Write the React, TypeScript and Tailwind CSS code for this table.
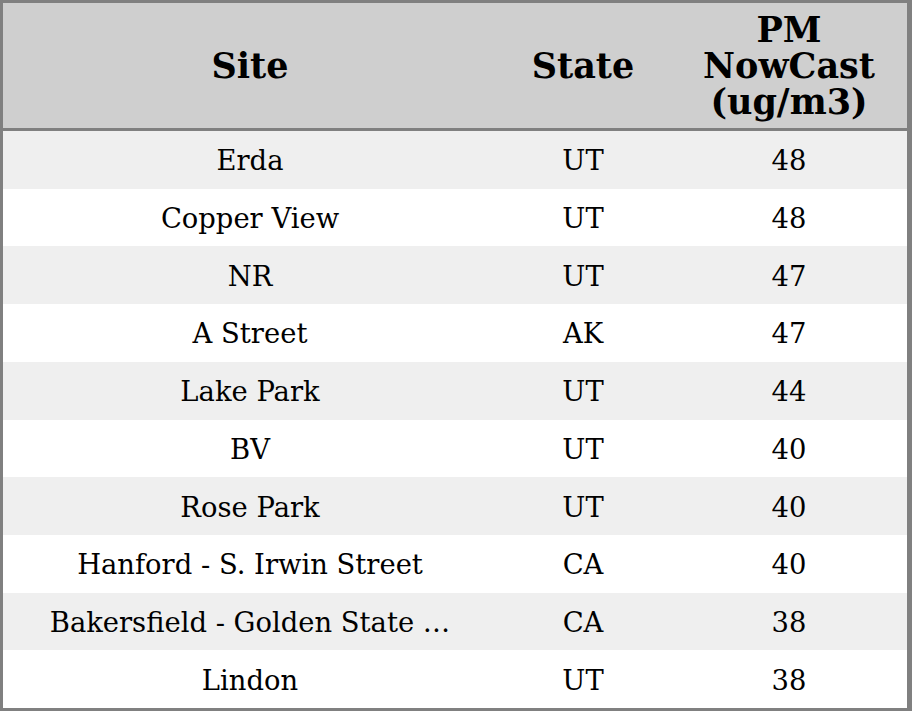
import React from "react";

const rows: [string, string, string][] = [
  ["Erda", "UT", "48"],
  ["Copper View", "UT", "48"],
  ["NR", "UT", "47"],
  ["A Street", "AK", "47"],
  ["Lake Park", "UT", "44"],
  ["BV", "UT", "40"],
  ["Rose Park", "UT", "40"],
  ["Hanford - S. Irwin Street", "CA", "40"],
  ["Bakersfield - Golden State …", "CA", "38"],
  ["Lindon", "UT", "38"],
];

export default function App() {
  return (
    <div
      className="w-[912px] h-[711px] bg-white text-black border-t-[3px] border-l-[3px] border-b-[3px] border-r-[5px] border-[#808080] flex flex-col"
      style={{ fontFamily: '"DejaVu Serif", serif' }}
    >
      <div className="grid grid-cols-[494px_172px_1fr] h-[128px] shrink-0 bg-[#cfcfcf] border-b-[3px] border-[#808080] text-[35px] leading-[36px] font-bold">
        <div className="flex items-center justify-center">Site</div>
        <div className="flex items-center justify-center">State</div>
        <div className="flex items-center justify-center text-center pl-[2px]">
          PM
          <br />
          NowCast
          <br />
          (ug/m3)
        </div>
      </div>
      <div className="flex-1 flex flex-col">
        {rows.map((r, i) => (
          <div
            key={i}
            className={`grid grid-cols-[494px_172px_1fr] flex-1 text-[27.4px] pt-[2px] ${
              i % 2 === 0 ? "bg-[#efefef]" : "bg-white"
            }`}
          >
            <div className="flex items-center justify-center whitespace-nowrap">{r[0]}</div>
            <div className="flex items-center justify-center">{r[1]}</div>
            <div className="flex items-center justify-center pl-[2px]">{r[2]}</div>
          </div>
        ))}
      </div>
    </div>
  );
}
